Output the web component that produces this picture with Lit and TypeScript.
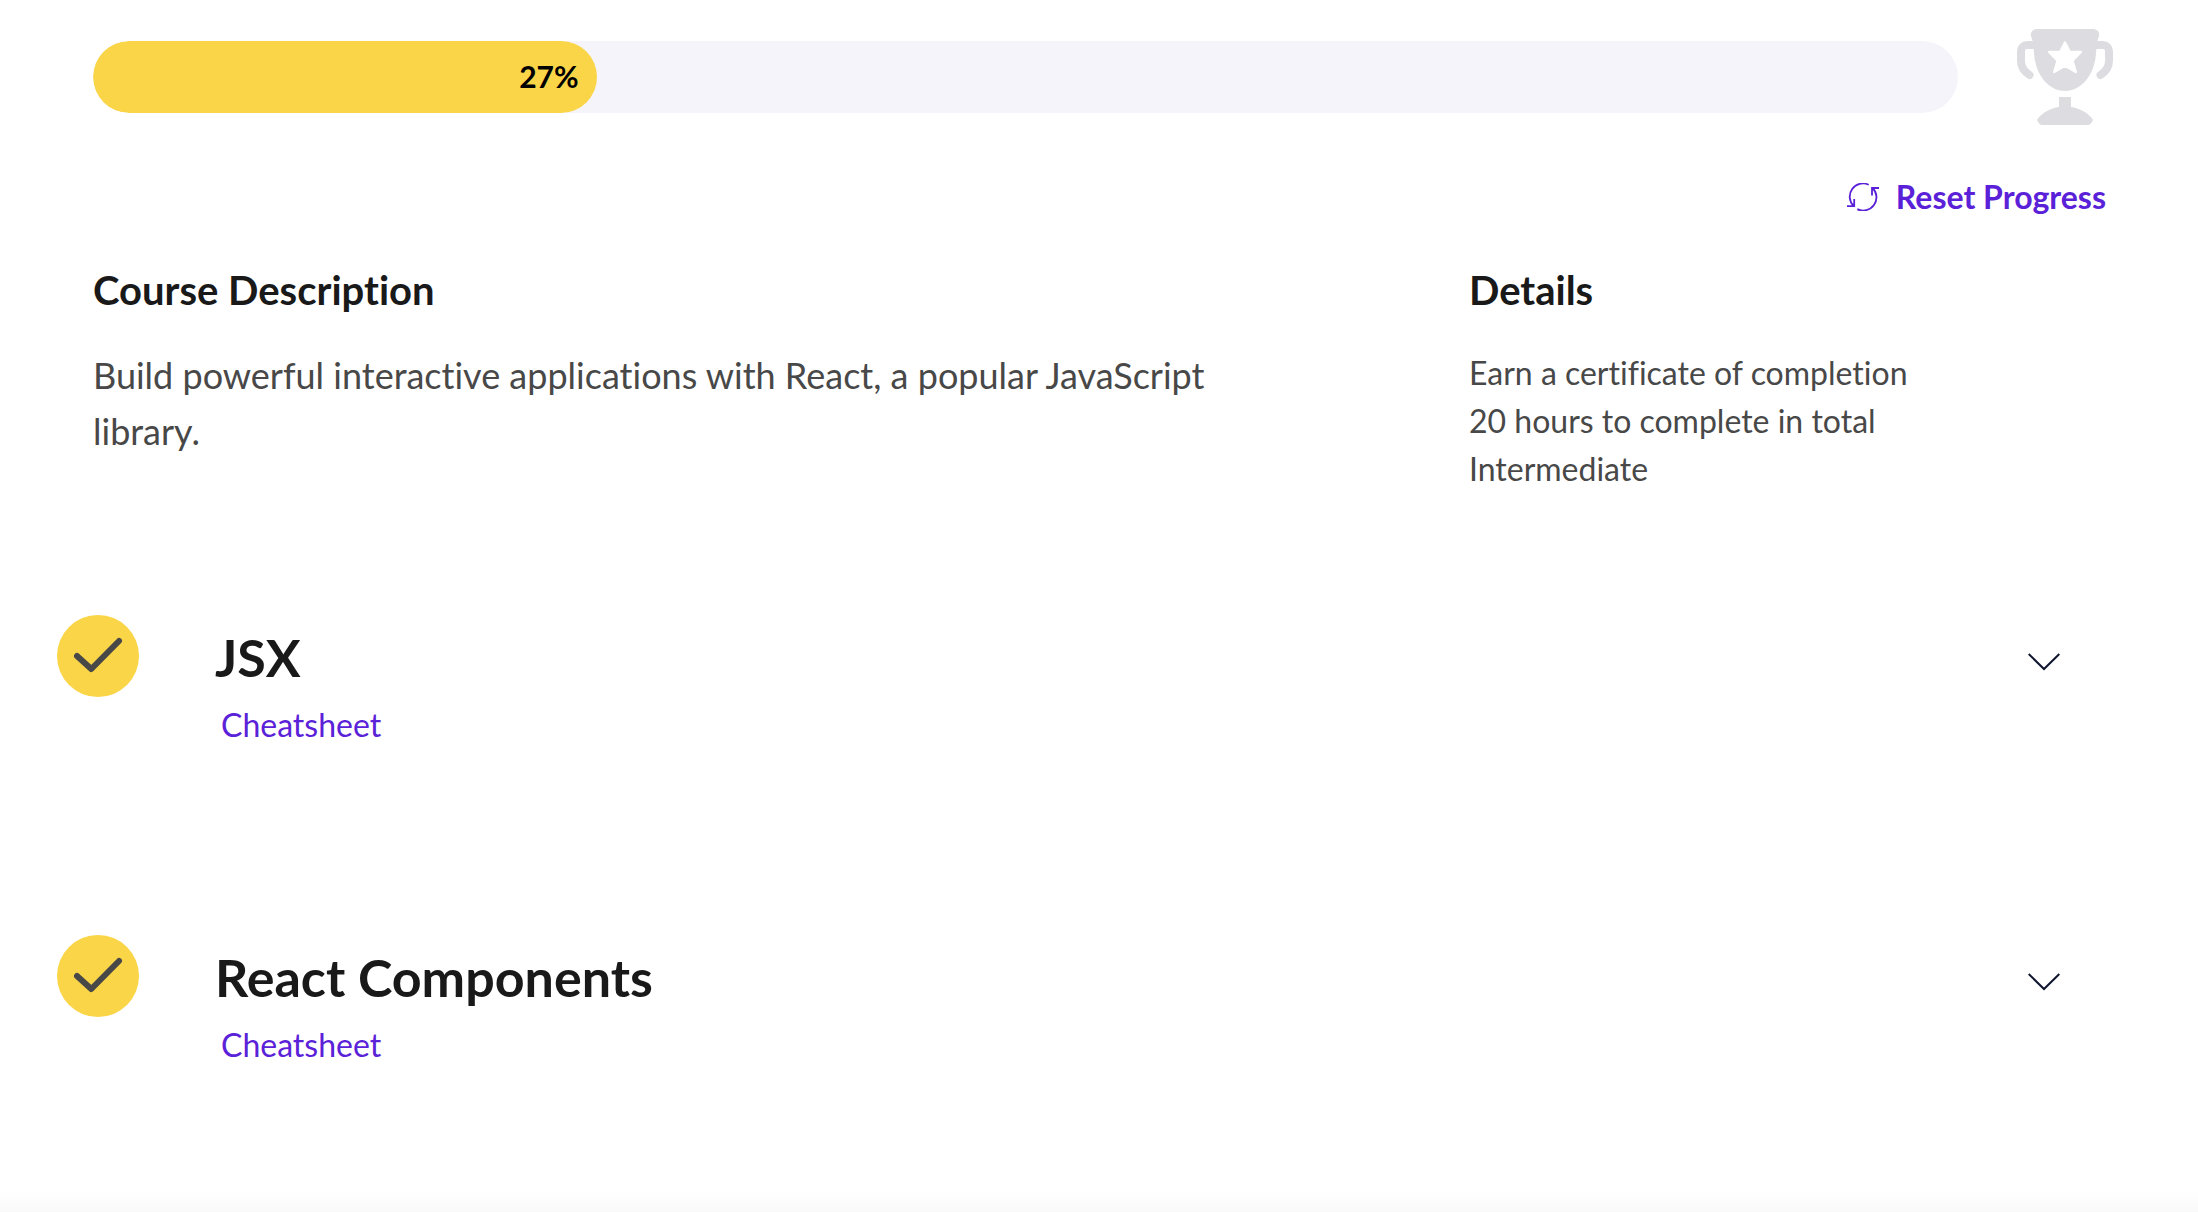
import { LitElement, html, css } from "lit";
import { customElement, property, state } from "lit/decorators.js";
import { styleMap } from "lit/directives/style-map.js";

@customElement("course-progress")
class CourseProgress extends LitElement {
  @property({ type: Number }) value = 0;

  static styles = css`
    :host {
      display: flex;
      align-items: center;
      gap: 59px;
    }
    .track {
      flex: 1;
      height: 72px;
      border-radius: 36px;
      background: #f5f4fa;
      overflow: hidden;
    }
    .fill {
      box-sizing: border-box;
      height: 100%;
      display: flex;
      align-items: center;
      justify-content: flex-end;
      padding: 0 18px 2px 0;
      border-radius: 36px;
      background: #fad548;
      color: #000;
      font-size: 30px;
      font-weight: 700;
      line-height: 48px;
    }
    .trophy {
      width: 96px;
      height: 96px;
      flex: none;
    }
  `;

  render() {
    return html`
      <div class="track" role="progressbar" aria-label="Course progress" aria-valuemin="0" aria-valuemax="100" aria-valuenow=${this.value}>
        <div class="fill" style=${styleMap({ width: `${this.value}%` })}>${this.value}%</div>
      </div>
      <svg class="trophy" viewBox="0 0 96 96" fill="#dddce1" aria-hidden="true">
        <path d="M20 0H76C80 0 83 3 82 7L80 13C79 22 79 30 77 36C73 50 62 62 48 62S23 50 19 36C17 30 17 22 16 13L14 7C13 3 16 0 20 0Z" />
        <path d="M17 16H10a6 6 0 0 0-6 6V32c0 6 4 11 8.5 14M79 16H86a6 6 0 0 1 6 6V32c0 6-4 11-8.5 14" fill="none" stroke="#dddce1" stroke-width="8" stroke-linecap="round" />
        <path d="M48 13.5L52.8 23H64L55.4 31.6L58.8 43L48 36.8L37.2 43L40.6 31.6L32 23H43.2Z" fill="#fff" stroke="#fff" stroke-width="2.4" stroke-linejoin="round" />
        <path d="M42 68H54V78C62 79 72 84 76 91Q75 94 72 96H24Q21 94 20 91C24 84 34 79 42 78Z" />
      </svg>
    `;
  }
}

@customElement("course-module")
class CourseModule extends LitElement {
  @property() name = "";
  @state() open = false;

  static styles = css`
    :host {
      display: grid;
      grid-template-columns: 82px 1fr auto;
      column-gap: 76px;
      align-items: start;
    }
    .badge {
      width: 82px;
      height: 82px;
    }
    .title {
      margin: 0;
      padding-top: 8px;
      color: #19191a;
      font-size: 52px;
      font-weight: 700;
      line-height: 68px;
    }
    .sheet {
      display: inline-block;
      margin: 10px 0 0 6px;
      color: #5a21d8;
      font-size: 32px;
      line-height: 48px;
      text-decoration: none;
    }
    .toggle {
      display: flex;
      padding: 24px 16px;
      border: 0;
      background: none;
      cursor: pointer;
    }
    .chevron {
      width: 32px;
      height: 32px;
    }
  `;

  render() {
    return html`
      <svg class="badge" viewBox="0 0 82 82" role="img" aria-label="Completed">
        <circle cx="41" cy="41" r="41" fill="#fad548" />
        <path d="M20 41L34.3 54L62 26" fill="none" stroke="#484848" stroke-width="6" stroke-linecap="round" stroke-linejoin="round" />
      </svg>
      <div>
        <h2 class="title">${this.name}</h2>
        <a class="sheet" href="#cheatsheet">Cheatsheet</a>
      </div>
      <button
        class="toggle"
        aria-label="Toggle ${this.name}"
        aria-expanded=${this.open ? "true" : "false"}
        @click=${() => (this.open = !this.open)}
      >
        <svg class="chevron" viewBox="0 0 32 32" aria-hidden="true">
          <path d="M0.7 15L16 30L31.3 15" fill="none" stroke="#10162f" stroke-width="2" />
        </svg>
      </button>
    `;
  }
}

@customElement("app-root")
class AppRoot extends LitElement {
  private details = ["Earn a certificate of completion", "20 hours to complete in total", "Intermediate"];
  private modules = ["JSX", "React Components"];

  static styles = css`
    :host {
      display: flex;
      flex-direction: column;
      min-height: 100vh;
      background: #fff;
      font-family: Lato, "Liberation Sans", sans-serif;
      font-variant-ligatures: none;
    }
    .overview {
      padding: 29px 85px 0 93px;
    }
    .actions {
      display: flex;
      justify-content: flex-end;
      margin-top: 48px;
    }
    .reset {
      display: flex;
      align-items: center;
      gap: 17px;
      padding: 0 7px;
      border: 0;
      background: none;
      color: #5a21d8;
      font-family: inherit;
      font-size: 32px;
      font-weight: 700;
      line-height: 48px;
      cursor: pointer;
    }
    .cycle {
      width: 32px;
      height: 28px;
    }
    .columns {
      display: grid;
      grid-template-columns: 2fr 1fr;
      column-gap: 88px;
      margin-top: 41px;
    }
    .heading {
      margin: 0 0 29px;
      color: #19191a;
      font-size: 40px;
      font-weight: 700;
      line-height: 56px;
    }
    .summary {
      margin: 0;
      max-width: 1180px;
      color: #484848;
      font-size: 36px;
      line-height: 56px;
    }
    .facts {
      margin: 0;
      padding: 2px 0 0;
      list-style: none;
      color: #484848;
      font-size: 32px;
      line-height: 48px;
    }
    .modules {
      display: flex;
      flex-direction: column;
      gap: 180px;
      padding: 122px 122px 0 57px;
    }
    .module {
      min-height: 140px;
    }
    .fade {
      height: 20px;
      margin-top: auto;
      background: linear-gradient(#fff, #f9f9f9);
    }
  `;

  render() {
    return html`
      <section class="overview">
        <course-progress .value=${27}></course-progress>
        <div class="actions">
          <button class="reset">
            <svg class="cycle" viewBox="0 0 32 28" fill="none" stroke="#5a21d8" stroke-width="1.8" aria-hidden="true">
              <path d="M21.7 1.8A13.2 13.2 0 0 0 6.6 23M0 23.2H7.2V16" />
              <path d="M10.3 26.1A13.2 13.2 0 0 0 25.6 5M32 5H25V12.5" />
            </svg>
            Reset Progress
          </button>
        </div>
        <div class="columns">
          <div>
            <h2 class="heading">Course Description</h2>
            <p class="summary">
              Build powerful interactive applications with React, a popular JavaScript library.
            </p>
          </div>
          <div>
            <h2 class="heading">Details</h2>
            <ul class="facts">
              ${this.details.map((fact) => html`<li>${fact}</li>`)}
            </ul>
          </div>
        </div>
      </section>
      <section class="modules">
        ${this.modules.map((name) => html`<course-module class="module" .name=${name}></course-module>`)}
      </section>
      <div class="fade"></div>
    `;
  }
}
